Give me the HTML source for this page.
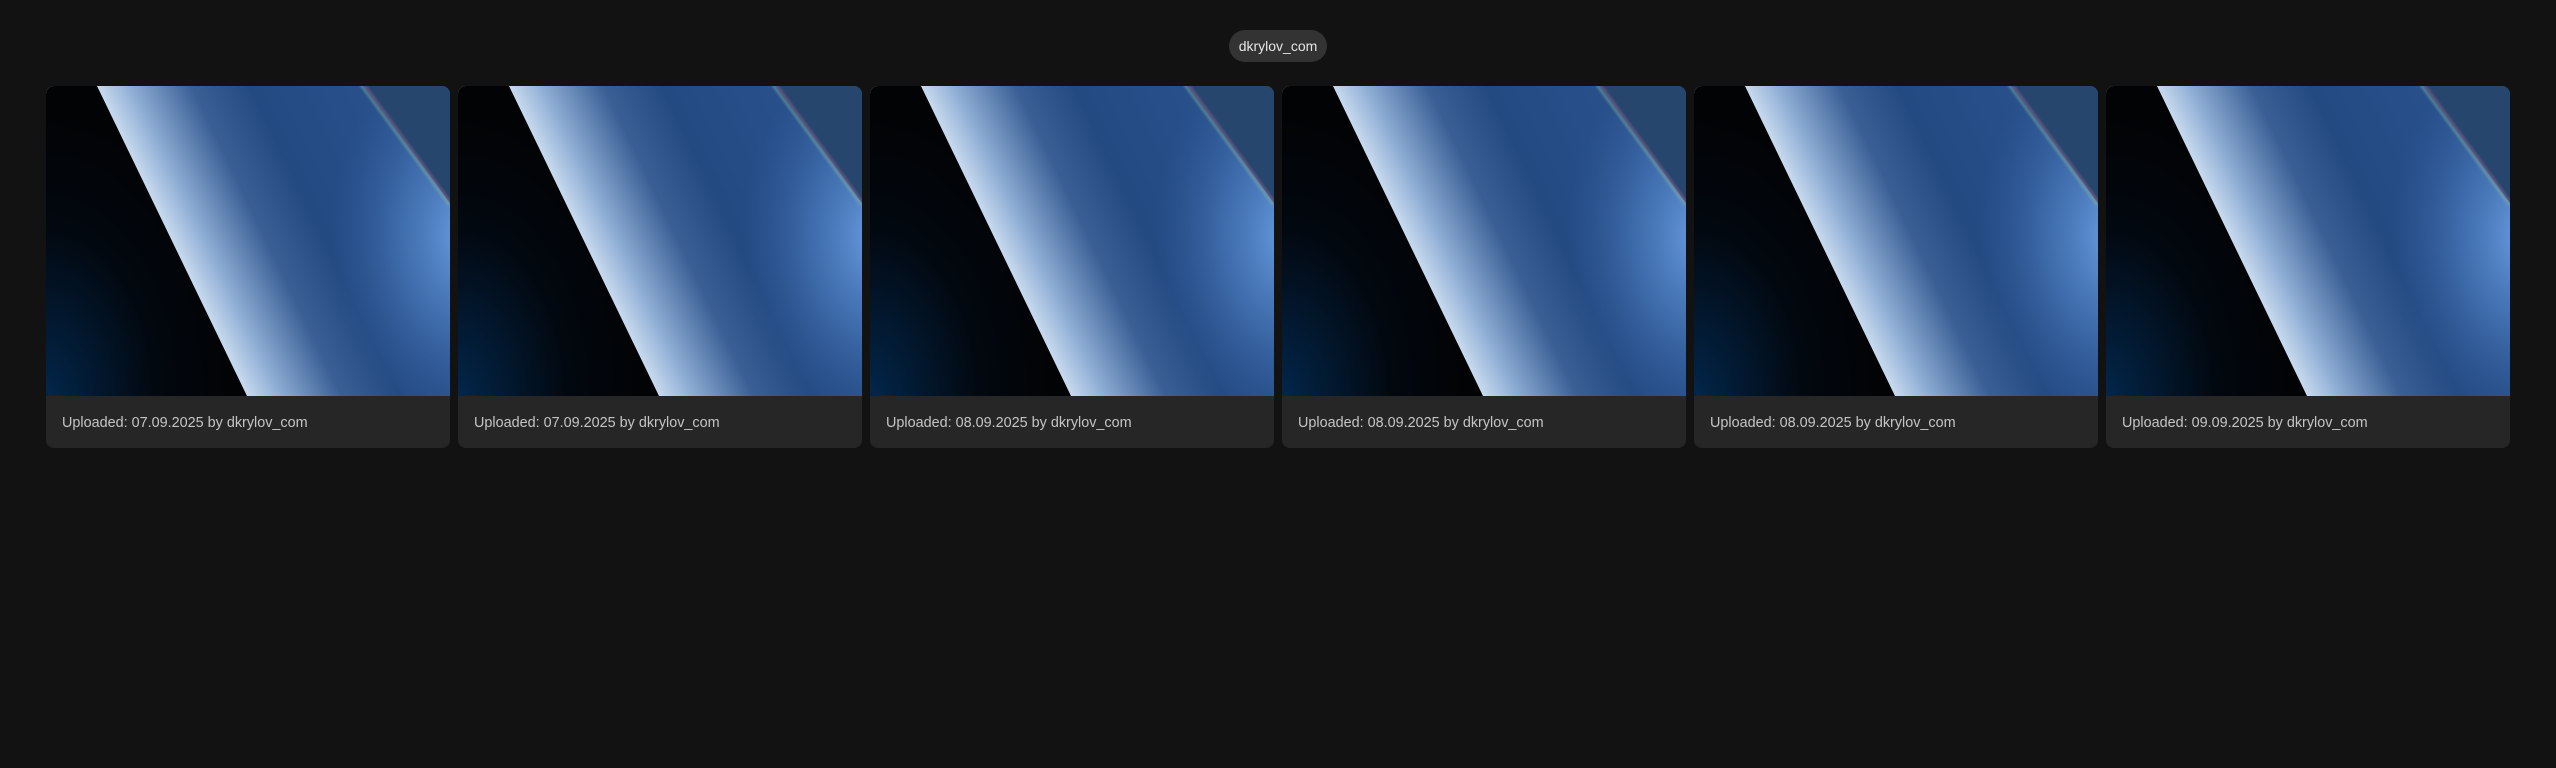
<!DOCTYPE html>
<html><head><meta charset="utf-8"><style>
html,body{margin:0;padding:0;background:#121212;width:2556px;height:768px;overflow:hidden;font-family:"Liberation Sans",sans-serif}
.pill{position:absolute;left:1229px;top:30px;width:98px;height:32px;border-radius:16px;background:#333;color:#e6e6e6;font-size:14px;line-height:32px;text-align:center}
.row{position:absolute;left:46px;top:86px;display:flex;gap:8px}
.card{width:404px;height:362px;background:#262626;border-radius:8px;overflow:hidden}
.card svg{display:block;width:404px;height:310px}
.cap{height:52px;line-height:54px;padding-left:16px;color:#c4c4c4;font-size:14.4px}
</style></head><body>
<div class="pill">dkrylov_com</div>
<div class="row">
<script>
const dates=["07.09.2025","07.09.2025","08.09.2025","08.09.2025","08.09.2025","09.09.2025"];
const svg=`<svg viewBox="0 0 404 310" preserveAspectRatio="none">
<defs>
<linearGradient id="bl" gradientUnits="userSpaceOnUse" x1="126" y1="155" x2="400" y2="22">
<stop offset="0" stop-color="#c8daee"/><stop offset="0.1" stop-color="#8eadd4"/><stop offset="0.28" stop-color="#3a5f95"/><stop offset="0.45" stop-color="#244a82"/><stop offset="1" stop-color="#2a5390"/></linearGradient>
<radialGradient id="br" gradientUnits="userSpaceOnUse" cx="420" cy="150" r="150" gradientTransform="translate(420 150) scale(0.9 1.3) translate(-420 -150)">
<stop offset="0" stop-color="#6a9ee2" stop-opacity="1"/><stop offset="0.5" stop-color="#5588cc" stop-opacity="0.5"/><stop offset="1" stop-color="#3a68aa" stop-opacity="0"/></radialGradient>
<radialGradient id="gl" cx="0" cy="1" r="0.9"><stop offset="0" stop-color="#02264a"/><stop offset="0.6" stop-color="#020810"/><stop offset="1" stop-color="#020305"/></radialGradient>
<filter id="bf"><feGaussianBlur stdDeviation="1"/></filter>
</defs>
<rect width="404" height="310" fill="url(#bl)"/>
<rect width="404" height="310" fill="url(#br)"/>
<polygon points="318,0 404,0 404,117" fill="#26466e"/>
<g filter="url(#bf)">
<line x1="314" y1="-2" x2="403" y2="119" stroke="#7fb89a" stroke-width="2" opacity="0.6"/>
<line x1="318" y1="-2" x2="406" y2="118" stroke="#a0608c" stroke-width="2" opacity="0.6"/>
</g>
<polygon points="0,0 51,0 201,310 0,310" fill="url(#gl)"/>
</svg>`;
document.write(dates.map(d=>`<div class="card">${svg}<div class="cap">Uploaded: ${d} by dkrylov_com</div></div>`).join(""));
</script>
</div>
</body></html>
